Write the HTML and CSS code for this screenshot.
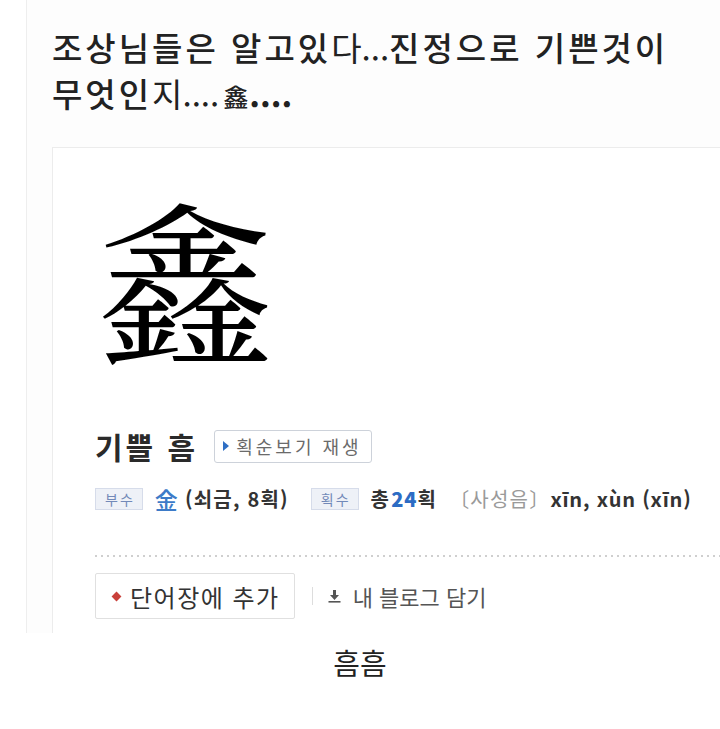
FILE: index.html
```html
<!DOCTYPE html>
<html lang="ko">
<head>
    <meta charset="UTF-8">
    <meta name="viewport" content="width=device-width, initial-scale=1.0">
    <title>흠흠</title>
    <link rel="stylesheet" href="styles.css">
</head>
<body>

<div class="post-shot">
    <h1 class="post-title">조상님들은 알고있<span class="ellip">다...</span>진정으로 기쁜것이<br>무엇인<span class="ellip">지....</span><span class="title-hanja">鑫</span><b class="ellip">....</b></h1>

    <div class="dict-card">
        <div class="hanja-big">鑫</div>

        <div class="word-row">
            <span class="word">기쁠 흠</span>
            <button class="stroke-btn"><span class="play"></span>획순보기 재생</button>
        </div>

        <div class="info-row">
            <span class="tag">부수</span>
            <span class="radical">金</span>
            <span class="info-text">(쇠금, 8획)</span>
            <span class="tag tag-gap">획수</span>
            <span class="info-text">총<b class="num">24</b>획</span>
            <span class="tone">〔사성음〕</span>
            <span class="pinyin">xīn, xùn (xīn)</span>
        </div>

        <div class="dots"></div>

        <div class="card-actions">
            <button class="add-btn"><span class="diamond"></span>단어장에 추가</button>
            <span class="sep"></span>
            <span class="blog-link">
                <svg class="down" width="13" height="14" viewBox="0 0 13 14">
                    <path d="M5 1h3v5h3l-4.5 5L2 6h3z" fill="#555"/>
                    <rect x="0.5" y="12" width="12" height="1.6" fill="#555"/>
                </svg>
                내 블로그 담기
            </span>
        </div>
    </div>
</div>

<p class="caption">흠흠</p>

</body>
</html>
```

FILE: styles.css
```css
body {
    margin: 0;
    background-color: #fff;
    font-family: "Noto Sans CJK KR", "Noto Sans", sans-serif;
    color: #222;
}
.post-shot {
    margin-left: 26px;
    height: 633px;
    border-left: 1px solid #eeeeee;
    background-color: #fdfdfd;
    padding: 24px 0 0 25px;
    box-sizing: border-box;
    overflow: hidden;
}
.post-title {
    margin: 0;
    font-size: 33px;
    line-height: 46px;
    font-weight: 500;
    letter-spacing: 3px;
    color: #222;
    white-space: nowrap;
}
/* dots hug the syllable before them */
.ellip {
    letter-spacing: 0;
    font-weight: 400;
}
b.ellip {
    font-weight: 700;
}
.title-hanja {
    font-size: 25px;
    font-weight: 500;
    letter-spacing: 0;
    margin: 0 1px 0 4px;
}
.dict-card {
    margin-top: 28px;
    height: 500px;
    border: 1px solid #ececec;
    border-right: none;
    background-color: #fff;
    padding: 0 0 0 42px;
    box-sizing: border-box;
}
.hanja-big {
    font-family: "Noto Serif CJK KR", "Noto Serif CJK SC", "Noto Sans CJK KR", serif;
    font-size: 175px;
    line-height: 1;
    margin: 40px 0 0 3px;
    color: #000;
}
.word-row {
    display: flex;
    align-items: center;
    margin-top: 61px;
}
.word {
    font-size: 30px;
    font-weight: 700;
    letter-spacing: 3px;
    color: #2a2a2a;
    margin-right: 16px;
}
.stroke-btn {
    font-family: inherit;
    font-size: 18px;
    letter-spacing: 3px;
    color: #6a6a6a;
    background: #fff;
    border: 1px solid #cdd2da;
    border-radius: 3px;
    height: 33px;
    padding: 0 9px 0 8px;
    display: flex;
    align-items: center;
}
.play {
    width: 0;
    height: 0;
    border-left: 6px solid #2f6fc4;
    border-top: 5px solid transparent;
    border-bottom: 5px solid transparent;
    margin-right: 7px;
}
.info-row {
    display: flex;
    align-items: center;
    margin-top: 16px;
    font-size: 20px;
    letter-spacing: 1.2px;
}
.tag {
    font-size: 14px;
    letter-spacing: 2px;
    color: #7289b8;
    background-color: #eef1f7;
    border: 1px solid #d6dcea;
    padding: 0 7px 0 9px;
    line-height: 20px;
    margin-right: 12px;
}
.tag-gap {
    margin-left: 22px;
}
.radical {
    color: #3d7bc8;
    font-size: 23px;
    font-weight: 500;
    margin-right: 6px;
    line-height: 24px;
}
.info-text {
    font-weight: 700;
    color: #333;
}
.num {
    color: #2c6cc4;
    letter-spacing: 1px;
    margin-left: 1px;
}
.tone {
    color: #9a9a9a;
    margin-left: 12px;
}
.pinyin {
    font-weight: 700;
    color: #333;
    letter-spacing: 0.8px;
}
.dots {
    margin-top: 42px;
    height: 2px;
    background-image: linear-gradient(to right, #cfcfcf 2px, transparent 2px);
    background-size: 6px 2px;
}
.card-actions {
    padding-top: 16px;
    display: flex;
    align-items: center;
}
.add-btn {
    font-family: inherit;
    font-size: 24px;
    letter-spacing: 1.5px;
    color: #333;
    background: #fff;
    border: 1px solid #e0e0e0;
    border-radius: 2px;
    height: 46px;
    padding: 0 14px 0 17px;
    display: flex;
    align-items: center;
}
.diamond {
    width: 7px;
    height: 7px;
    background-color: #c9403a;
    transform: rotate(45deg);
    margin-right: 10px;
}
.sep {
    width: 1px;
    height: 18px;
    background-color: #ddd;
    margin: 0 15px 0 17px;
}
.blog-link {
    font-size: 22px;
    color: #555;
    display: flex;
    align-items: center;
    gap: 12px;
}
.caption {
    margin: 8px 0 0;
    text-align: center;
    font-size: 29px;
    color: #222;
}
```
